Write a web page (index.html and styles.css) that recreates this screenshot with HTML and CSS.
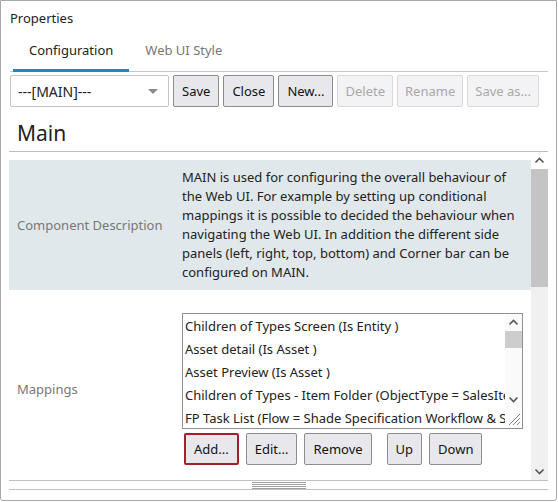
FILE: index.html
```html
<!DOCTYPE html>
<html lang="en">
<head>
  <meta charset="UTF-8">
  <title>Properties</title>
  <link rel="stylesheet" href="styles.css">
</head>
<body>
  <div class="window">
    <div class="title">Properties</div>

    <!-- Tabs -->
    <div class="tabs">
      <div class="tab active">Configuration</div>
      <div class="tab">Web UI Style</div>
    </div>

    <!-- Toolbar -->
    <div class="toolbar">
      <div class="select">
        <span>---[MAIN]---</span>
        <span class="caret"></span>
      </div>
      <button class="btn">Save</button>
      <button class="btn">Close</button>
      <button class="btn">New...</button>
      <button class="btn" disabled>Delete</button>
      <button class="btn" disabled>Rename</button>
      <button class="btn" disabled>Save as...</button>
    </div>

    <h2 class="heading">Main</h2>

    <div class="scroller">
      <div class="content">
        <div class="row desc">
          <div class="label">Component Description</div>
          <div class="value">MAIN is used for configuring the overall behaviour of the Web UI. For example by setting up conditional mappings it is possible to decided the behaviour when navigating the Web UI. In addition the different side panels (left, right, top, bottom) and Corner bar can be configured on MAIN.</div>
        </div>
        <div class="row mappings">
          <div class="label">Mappings</div>
          <div class="value">
            <div class="listbox">
              <div class="items">
                <div class="item">Children of Types Screen (Is Entity )</div>
                <div class="item">Asset detail (Is Asset )</div>
                <div class="item">Asset Preview (Is Asset )</div>
                <div class="item">Children of Types - Item Folder (ObjectType = SalesItem)</div>
                <div class="item">FP Task List (Flow = Shade Specification Workflow &amp; State)</div>
              </div>
              <div class="lb-scroll">
                <svg class="arrow" width="17" height="17" viewBox="0 0 17 17"><path d="M4.5 10.5 L8.5 6.5 L12.5 10.5" fill="none" stroke="#555" stroke-width="1.6"/></svg>
                <div class="lb-thumb"></div>
                <div class="lb-track"></div>
                <svg class="arrow" width="17" height="17" viewBox="0 0 17 17"><path d="M4.5 6.5 L8.5 10.5 L12.5 6.5" fill="none" stroke="#555" stroke-width="1.6"/></svg>
                <svg class="grip" width="17" height="20" viewBox="0 0 17 20"><path d="M15 6 L4 17 M15 10 L8 17 M15 14 L12 17" stroke="#888" stroke-width="1"/></svg>
              </div>
            </div>
            <div class="actions">
              <button class="btn focus">Add...</button>
              <button class="btn">Edit...</button>
              <button class="btn">Remove</button>
              <button class="btn spaced">Up</button>
              <button class="btn">Down</button>
            </div>
          </div>
        </div>
      </div>
      <div class="vscroll">
        <svg class="arrow" width="17" height="17" viewBox="0 0 17 17"><path d="M4.5 10.5 L8.5 6.5 L12.5 10.5" fill="none" stroke="#555" stroke-width="1.6"/></svg>
        <div class="thumb"></div>
        <div class="track"></div>
        <svg class="arrow" width="17" height="17" viewBox="0 0 17 17"><path d="M4.5 6.5 L8.5 10.5 L12.5 6.5" fill="none" stroke="#555" stroke-width="1.6"/></svg>
      </div>
    </div>

    <div class="splitter"><span class="handle"></span></div>
  </div>
</body>
</html>
```

FILE: styles.css
```css
/* ======= Base ======= */
body {
  margin: 0;
  font-family: "Noto Sans", sans-serif;
  font-size: 13px;
  color: #222;
  background: #fff;
}

.window {
  width: 557px;
  height: 501px;
  box-sizing: border-box;
  border: 1px solid #a8a8a8;
  border-radius: 0 0 3px 3px;
  padding: 0 8px 0 8px;
  display: flex;
  flex-direction: column;
}

.title {
  padding: 8px 0 0 1px;
  height: 24px;
  line-height: 18px;
}

/* Tabs */
.tabs {
  display: flex;
  margin-left: 1px;
  border-bottom: 1px solid #c8c8c8;
  height: 38px;
}

.tab {
  padding: 0 16px;
  line-height: 34px;
  color: #777;
  border-bottom: 3px solid transparent;
  margin-bottom: -1px;
}

.tab.active {
  color: #222;
  border-bottom-color: #1489d2;
  margin-left: 3px;
}

/* Toolbar */
.toolbar {
  display: flex;
  gap: 4px;
  margin: 3px 0 0 1px;
  height: 32px;
}

.toolbar > * {
  flex-shrink: 0;
}

.select {
  width: 159px;
  box-sizing: border-box;
  border: 1px solid #c4c4c4;
  border-radius: 2px;
  display: flex;
  align-items: center;
  justify-content: space-between;
  padding: 0 10px 0 7px;
  font-size: 14px;
}

.caret {
  width: 0;
  height: 0;
  border-left: 5px solid transparent;
  border-right: 5px solid transparent;
  border-top: 5px solid #8a8a8a;
}

.btn {
  font-family: inherit;
  font-size: 13px;
  color: #111;
  background: #e8e8ec;
  border: 1px solid #8c8c8c;
  border-radius: 2px;
  padding: 0 8px;
  height: 32px;
  white-space: nowrap;
}

.btn:disabled {
  color: #a8a8a8;
  background: #f3f3f5;
  border-color: #d8d8d8;
  padding: 0 7px;
}

.heading {
  font-weight: normal;
  font-size: 21px;
  margin: 0;
  padding: 8px 0 0 8px;
  height: 36px;
  line-height: 36px;
  border-bottom: 1px solid #bdbdbd;
}

/* Scroll area */
.scroller {
  display: flex;
  height: 328px;
  border-bottom: 1px solid #c0c0c0;
  overflow: hidden;
}

.content {
  flex: 1;
  padding-top: 8px;
}

.row {
  display: flex;
  align-items: center;
}

.row .label {
  width: 165px;
  padding-left: 8px;
  color: #777;
  flex-shrink: 0;
}

.row.desc {
  background: #e1e8eb;
  padding: 8px 0;
}

.desc .value {
  line-height: 19px;
  padding-right: 12px;
}

.row.mappings {
  padding: 23px 0 28px;
}

.vscroll {
  width: 17px;
  display: flex;
  flex-direction: column;
  background: #f0f0f0;
}

.vscroll .arrow {
  display: block;
  background: #fff;
}

.vscroll .arrow:last-child {
  background: #f0f0f0;
}

.thumb {
  height: 118px;
  background: #c4c4c4;
}

.track {
  flex: 1;
}

/* Listbox */
.listbox {
  width: 341px;
  height: 116px;
  box-sizing: border-box;
  border: 1px solid #8f8f8f;
  display: flex;
  overflow: hidden;
}

.items {
  flex: 1;
  overflow: hidden;
  padding-top: 1px;
}

.item {
  white-space: nowrap;
  line-height: 23px;
  padding-left: 2px;
}

.lb-scroll {
  width: 17px;
  flex-shrink: 0;
  display: flex;
  flex-direction: column;
  background: #fafafa;
}

.lb-scroll .arrow {
  display: block;
}

.lb-thumb {
  height: 17px;
  background: #cdcdcd;
}

.lb-track {
  flex: 1;
}

.lb-scroll .grip {
  display: block;
  background: #fff;
}

.actions {
  display: flex;
  gap: 7px;
  margin: 4px 0 0 2px;
}

.btn.focus {
  border: 2px solid #a3202a;
}

.btn.spaced {
  margin-left: 8px;
}

/* Splitter */
.splitter {
  height: 8px;
  border-bottom: 1px solid #c0c0c0;
  display: flex;
  justify-content: center;
  align-items: flex-start;
}

.handle {
  width: 54px;
  height: 7px;
  margin-top: 1px;
  background: repeating-linear-gradient(#a0a0a0 0 1px, transparent 1px 2px);
}
```
